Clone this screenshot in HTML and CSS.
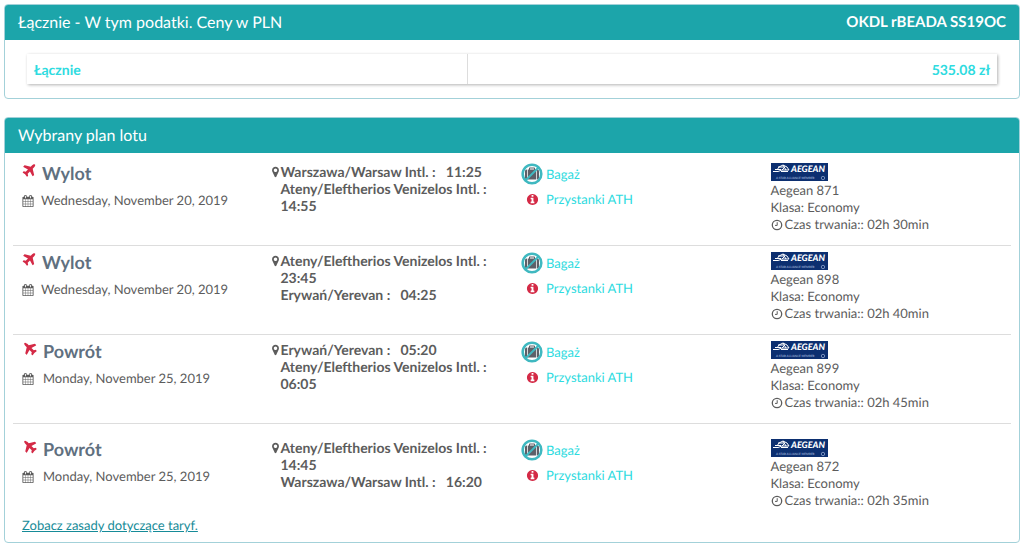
FILE: index.html
```html
<!DOCTYPE html>
<html lang="pl">
<head>
<meta charset="utf-8">
<meta name="viewport" content="width=device-width, initial-scale=1">
<title>Wybrany plan lotu</title>
<link rel="stylesheet" href="styles.css">
</head>
<body>
<svg class="sprite" aria-hidden="true">
  <symbol id="plane" viewBox="0 0 1792 1792"><path d="M1568 160q44 52 12 148t-108 172l-161 161 160 696q5 19-12 33l-128 96q-7 6-19 6-4 0-7-1-15-3-21-16l-279-508-259 259 53 194q5 17-8 31l-96 96q-9 9-23 9h-2q-15-2-24-13l-189-252-252-189q-11-7-13-23-1-13 9-25l96-97q9-9 23-9 6 0 8 1l194 53 259-259-508-279q-14-8-17-24-2-16 9-27l128-128q14-13 30-8l665 159 160-160q76-76 172-108t148 12z"/></symbol>
  <symbol id="calendar" viewBox="0 0 1792 1792"><path d="M192 1664h288v-288h-288v288zm352 0h320v-288h-320v288zm-352-352h288v-320h-288v320zm352 0h320v-320h-320v320zm-352-384h288v-288h-288v288zm736 736h320v-288h-320v288zm-384-736h320v-288h-320v288zm768 736h288v-288h-288v288zm-384-352h320v-320h-320v320zm-352-864v-288q0-13-9.5-22.5t-22.5-9.5h-64q-13 0-22.5 9.5t-9.5 22.5v288q0 13 9.5 22.5t22.5 9.5h64q13 0 22.5-9.5t9.5-22.5zm736 864h288v-320h-288v320zm-384-384h320v-288h-320v288zm384 0h288v-288h-288v288zm32-480v-288q0-13-9.5-22.5t-22.5-9.5h-64q-13 0-22.5 9.5t-9.5 22.5v288q0 13 9.5 22.5t22.5 9.5h64q13 0 22.5-9.5t9.5-22.5zm384-64v1280q0 52-38 90t-90 38h-1408q-52 0-90-38t-38-90v-1280q0-52 38-90t90-38h128v-96q0-66 47-113t113-47h64q66 0 113 47t47 113v96h384v-96q0-66 47-113t113-47h64q66 0 113 47t47 113v96h128q52 0 90 38t38 90z"/></symbol>
  <symbol id="marker" viewBox="384 0 1024 1792"><path d="M1152 640q0-106-75-181t-181-75-181 75-75 181 75 181 181 75 181-75 75-181zm256 0q0 109-33 179l-364 774q-16 33-47.5 52t-67.5 19-67.5-19-46.5-52l-365-774q-33-70-33-179 0-212 150-362t362-150 362 150 150 362z"/></symbol>
  <symbol id="info" viewBox="0 0 1792 1792"><path d="M1152 1376v-160q0-14-9-23t-23-9h-96v-512q0-14-9-23t-23-9h-320q-14 0-23 9t-9 23v160q0 14 9 23t23 9h96v320h-96q-14 0-23 9t-9 23v160q0 14 9 23t23 9h448q14 0 23-9t9-23zm-128-896v-160q0-14-9-23t-23-9h-192q-14 0-23 9t-9 23v160q0 14 9 23t23 9h192q14 0 23-9t9-23zm640 416q0 209-103 385.5t-279.5 279.5-385.5 103-385.5-103-279.5-279.5-103-385.5 103-385.5 279.5-279.5 385.5-103 385.5 103 279.5 279.5 103 385.5z"/></symbol>
  <symbol id="clock" viewBox="0 0 12 12"><circle cx="6" cy="6" r="4.7" fill="none" stroke="currentColor" stroke-width="1.3"/><path d="M6.2 3.2v3.2H4" fill="none" stroke="currentColor"/></symbol>
  <symbol id="nobag" viewBox="0 0 22 22"><path transform="translate(4 3.6) scale(.0078)" fill="#5d6068" d="M640 384h512v-128h-512v128zm-352 0v1280h-64q-92 0-158-66t-66-158v-832q0-92 66-158t158-66h64zm1120 0v1280h-1024v-1280h128v-160q0-40 28-68t68-28h576q40 0 68 28t28 68v160h128zm384 224v832q0 92-66 158t-158 66h-64v-1280h64q92 0 158 66t66 158z"/><circle cx="11" cy="11" r="9.3" fill="none" stroke="#3fb8c0" stroke-width="2.6"/><path d="M4.5 17.5l13-13" stroke="#3fb8c0" stroke-width="2"/></symbol>
  <symbol id="aegean" viewBox="0 0 57 18"><path fill="#0c2f70" d="M0 0h57v18H0z"/><path fill="none" stroke="#fff" d="M2 8.500h5l4-1.500h7l-2-3-4-2-4 2-2 3M7 4h7l-3 3M12 2l3 5M4 6.500h6M10 8.500h7"/><circle cx="52" cy="15" r="1.700" fill="none" stroke="#8fa3cc" stroke-width=".8"/></symbol>
</svg>

<main class="page">
  <section class="panel">
    <header class="panel-head">
      <h2 class="panel-title">Łącznie - W tym podatki. Ceny w PLN</h2>
      <strong class="booking">OKDL rBEADA SS19OC</strong>
    </header>
    <div class="total-body">
      <table class="total">
        <tr><th scope="row">Łącznie</th><td>535.08 zł</td></tr>
      </table>
    </div>
  </section>

  <section class="panel">
    <header class="panel-head"><h2 class="panel-title">Wybrany plan lotu</h2></header>
    <div class="flights">
      <article class="flight">
        <div class="leg">
          <h3 class="leg-title"><svg class="plane"><use href="#plane"/></svg>Wylot</h3>
          <p class="date"><svg class="icon"><use href="#calendar"/></svg>Wednesday, November 20, 2019</p>
        </div>
        <div class="route"><svg class="marker"><use href="#marker"/></svg>
          <div><p>Warszawa/Warsaw Intl. : &nbsp; 11:25</p><p>Ateny/Eleftherios Venizelos Intl. : &nbsp; 14:55</p></div></div>
        <div class="extras">
          <a class="extra" href="#bagaz"><svg class="nobag"><use href="#nobag"/></svg>Bagaż</a>
          <a class="extra" href="#przystanki"><svg class="info"><use href="#info"/></svg>Przystanki ATH</a>
        </div>
        <div class="carrier"><svg class="logo" viewBox="0 0 57 18"><use href="#aegean"/><text x="20" y="9" class="logo-name">AEGEAN</text><text x="5" y="16" class="logo-sub">A STAR ALLIANCE MEMBER</text></svg>
          <p>Aegean 871</p><p>Klasa: Economy</p><p class="duration"><svg class="clock"><use href="#clock"/></svg>Czas trwania:: 02h 30min</p></div>
      </article>
      <article class="flight">
        <div class="leg">
          <h3 class="leg-title"><svg class="plane"><use href="#plane"/></svg>Wylot</h3>
          <p class="date"><svg class="icon"><use href="#calendar"/></svg>Wednesday, November 20, 2019</p>
        </div>
        <div class="route"><svg class="marker"><use href="#marker"/></svg>
          <div><p>Ateny/Eleftherios Venizelos Intl. : &nbsp; 23:45</p><p>Erywań/Yerevan : &nbsp; 04:25</p></div></div>
        <div class="extras">
          <a class="extra" href="#bagaz"><svg class="nobag"><use href="#nobag"/></svg>Bagaż</a>
          <a class="extra" href="#przystanki"><svg class="info"><use href="#info"/></svg>Przystanki ATH</a>
        </div>
        <div class="carrier"><svg class="logo" viewBox="0 0 57 18"><use href="#aegean"/><text x="20" y="9" class="logo-name">AEGEAN</text><text x="5" y="16" class="logo-sub">A STAR ALLIANCE MEMBER</text></svg>
          <p>Aegean 898</p><p>Klasa: Economy</p><p class="duration"><svg class="clock"><use href="#clock"/></svg>Czas trwania:: 02h 40min</p></div>
      </article>
      <article class="flight return">
        <div class="leg">
          <h3 class="leg-title"><svg class="plane"><use href="#plane"/></svg>Powrót</h3>
          <p class="date"><svg class="icon"><use href="#calendar"/></svg>Monday, November 25, 2019</p>
        </div>
        <div class="route"><svg class="marker"><use href="#marker"/></svg>
          <div><p>Erywań/Yerevan : &nbsp; 05:20</p><p>Ateny/Eleftherios Venizelos Intl. : &nbsp; 06:05</p></div></div>
        <div class="extras">
          <a class="extra" href="#bagaz"><svg class="nobag"><use href="#nobag"/></svg>Bagaż</a>
          <a class="extra" href="#przystanki"><svg class="info"><use href="#info"/></svg>Przystanki ATH</a>
        </div>
        <div class="carrier"><svg class="logo" viewBox="0 0 57 18"><use href="#aegean"/><text x="20" y="9" class="logo-name">AEGEAN</text><text x="5" y="16" class="logo-sub">A STAR ALLIANCE MEMBER</text></svg>
          <p>Aegean 899</p><p>Klasa: Economy</p><p class="duration"><svg class="clock"><use href="#clock"/></svg>Czas trwania:: 02h 45min</p></div>
      </article>
      <article class="flight return last">
        <div class="leg">
          <h3 class="leg-title"><svg class="plane"><use href="#plane"/></svg>Powrót</h3>
          <p class="date"><svg class="icon"><use href="#calendar"/></svg>Monday, November 25, 2019</p>
        </div>
        <div class="route"><svg class="marker"><use href="#marker"/></svg>
          <div><p>Ateny/Eleftherios Venizelos Intl. : &nbsp; 14:45</p><p>Warszawa/Warsaw Intl. : &nbsp; 16:20</p></div></div>
        <div class="extras">
          <a class="extra" href="#bagaz"><svg class="nobag"><use href="#nobag"/></svg>Bagaż</a>
          <a class="extra" href="#przystanki"><svg class="info"><use href="#info"/></svg>Przystanki ATH</a>
        </div>
        <div class="carrier"><svg class="logo" viewBox="0 0 57 18"><use href="#aegean"/><text x="20" y="9" class="logo-name">AEGEAN</text><text x="5" y="16" class="logo-sub">A STAR ALLIANCE MEMBER</text></svg>
          <p>Aegean 872</p><p>Klasa: Economy</p><p class="duration"><svg class="clock"><use href="#clock"/></svg>Czas trwania:: 02h 35min</p></div>
      </article>
      <a class="rules" href="#taryfy">Zobacz zasady dotyczące taryf.</a>
    </div>
  </section>
</main>
</body>
</html>
```
FILE: styles.css
```css
* { box-sizing: border-box; }
body { margin: 0; background: #fff; color: #5c5c5c; font: 13px/17px Lato, "Open Sans", sans-serif; text-rendering: geometricPrecision; }
h2, h3, p { margin: 0; }
svg { fill: currentColor; flex: none; }
.sprite { position: absolute; width: 0; height: 0; }
.page { display: flex; flex-direction: column; gap: 18px; padding: 4px 4px 3px; }
.panel { border: 1px solid #a3d1d9; border-radius: 4px; overflow: hidden; }
.panel-head { display: flex; justify-content: space-between; align-items: center; height: 35px; padding: 0 13px; background: #1ca5aa; color: #fff; }
.panel-title { font-size: 16px; font-weight: 400; line-height: 20px; }
.booking { font-size: 15px; }
.total-body { padding: 14px 22px; }
.total { width: 100%; border-collapse: collapse; table-layout: fixed; box-shadow: 1px 1px 3px rgba(0, 0, 0, .3); color: #2edbe0; font-size: 14px; font-weight: 700; }
.total th { width: 440px; height: 30px; padding: 0 7px; border-right: 1px solid #ddd; text-align: left; }
.total td { padding: 0 7px; text-align: right; }
.flights { padding: 4px 8px 8px; }
.flight { display: grid; grid-template-columns: repeat(4, 1fr); padding: 6px 0 12px; border-bottom: 1px solid #ddd; }
.flight > div { padding: 0 9px; }
.flight.last { padding: 15px 0 8px; border-bottom: 0; }
.leg-title { display: flex; gap: 5px; color: #5f7080; font-size: 18px; line-height: 20px; }
.plane { width: 16px; height: 16px; margin-left: -1px; color: #d42a46; }
.return .plane { transform: rotate(-90deg); margin-left: 1px; }
.return .leg-title { gap: 4px; }
.date { display: flex; align-items: center; gap: 7px; margin-top: 9px; }
.return .date { gap: 9px; }
.icon { width: 12px; height: 12px; }
.route { display: flex; gap: 2px; font-size: 14px; font-weight: 700; }
.marker { width: 7px; height: 12px; margin-top: 3px; }
.extras { display: flex; flex-direction: column; align-items: flex-start; gap: 6px; }
.extra { display: flex; align-items: center; color: #2edbe0; text-decoration: none; gap: 3px; }
.nobag { width: 22px; height: 22px; }
.info { width: 13px; height: 13px; margin: 0 4px 0 5px; color: #d42a46; }
.logo { display: block; width: 57px; height: 18px; margin-bottom: 1px; }
.logo-name { fill: #fff; font: italic 900 9px Lato, sans-serif; }
.logo-sub { fill: #8fa3cc; font: 700 3px Lato, sans-serif; }
.duration { display: flex; align-items: center; gap: 2px; }
.clock { width: 12px; height: 12px; }
.rules { display: inline-block; margin-left: 9px; color: #168b98; }
```
